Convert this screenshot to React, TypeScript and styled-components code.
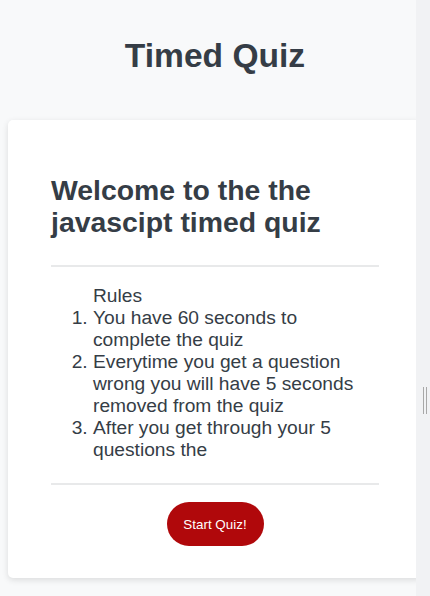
import React from "react";
import styled, { createGlobalStyle } from "styled-components";

const Global = createGlobalStyle`
  html, body { margin: 0; padding: 0; }
  body {
    background: #f8f9fa;
    font-family: "Liberation Sans", Arial, sans-serif;
    color: #343a40;
    overflow: hidden;
  }
`;

const Page = styled.div`
  position: relative;
  width: 430px;
  height: 596px;
  overflow: hidden;
  padding: 0 8px;
  box-sizing: border-box;
`;

const Title = styled.h1`
  margin: 0;
  padding-top: 37px;
  height: 120px;
  box-sizing: border-box;
  text-align: center;
  font-size: 33.6px;
  font-weight: 700;
  line-height: normal;
  color: #353d46;
`;

const Card = styled.section`
  background: #ffffff;
  border-radius: 5px;
  box-shadow: 0 2px 6px rgba(0, 0, 0, 0.12);
  padding: 54px 43px 32px;
  height: 458px;
  box-sizing: border-box;
  display: flex;
  flex-direction: column;
`;

const Heading = styled.h2`
  margin: 0;
  font-size: 28.4px;
  font-weight: 700;
  line-height: 32px;
  color: #353d46;
`;

const Rule = styled.hr<{ $top: number }>`
  margin: ${(p) => p.$top}px 0 0;
  border: 0;
  height: 2px;
  background: #e8e9ea;
`;

const List = styled.ol`
  margin: 18px 0 0;
  padding-left: 42px;
  font-size: 19.2px;
  line-height: 22.1px;
  color: #353d46;
`;

const ListTitle = styled.div`
  list-style: none;
`;

const Item = styled.li`
  padding-left: 0;
`;

const ButtonRow = styled.div`
  display: flex;
  justify-content: center;
  margin-top: 17px;
`;

const StartButton = styled.button`
  width: 97px;
  height: 44px;
  border: 0;
  border-radius: 22px;
  background: #b0080b;
  color: #ffffff;
  font-family: "Liberation Sans", Arial, sans-serif;
  font-size: 13.4px;
  cursor: pointer;
`;

const SideStrip = styled.div`
  position: absolute;
  top: 0;
  right: 0;
  width: 14px;
  height: 100%;
  background: #f1f2f4;
`;

const Grip = styled.div`
  position: absolute;
  top: 387px;
  left: 7px;
  width: 4px;
  height: 27px;
  border-left: 1px solid #a8a8a8;
  border-right: 1px solid #a8a8a8;
  box-sizing: border-box;
`;

export default function App() {
  return (
    <>
      <Global />
      <Page>
        <Title>Timed Quiz</Title>
        <Card>
          <Heading>
            Welcome to the the
            <br />
            javascipt timed quiz
          </Heading>
          <Rule $top={27} />
          <List>
            <ListTitle>Rules</ListTitle>
            <Item>You have 60 seconds to complete the quiz</Item>
            <Item>
              Everytime you get a question wrong you will have 5 seconds
              removed from the quiz
            </Item>
            <Item>After you get through your 5 questions the</Item>
          </List>
          <Rule $top={22} />
          <ButtonRow>
            <StartButton>Start Quiz!</StartButton>
          </ButtonRow>
        </Card>
        <SideStrip>
          <Grip />
        </SideStrip>
      </Page>
    </>
  );
}
